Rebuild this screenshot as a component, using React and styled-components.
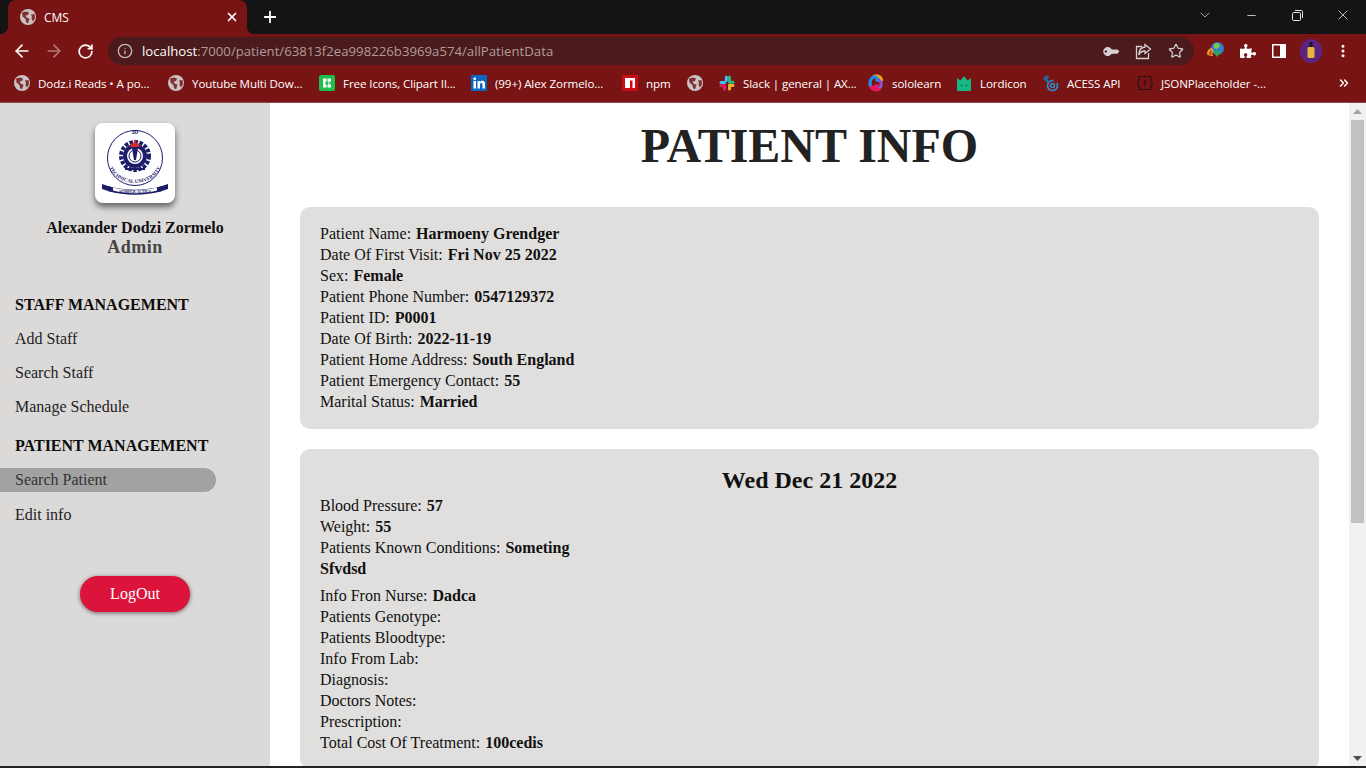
import React from "react";
import styled, { createGlobalStyle } from "styled-components";
import { ArrowLeft, ArrowRight, RotateCw, Info, Star, X, Plus, Minus, ChevronDown, ChevronsRight, EllipsisVertical } from "lucide-react";
import { FaKey, FaPuzzlePiece } from "react-icons/fa";

const Global = createGlobalStyle`
  html, body { margin: 0; padding: 0; height: 768px; overflow: hidden; background: #fff; }
  * { box-sizing: border-box; }
`;
const Page = styled.div`display:flex;flex-direction:column;width:1366px;height:768px;overflow:hidden;font-family:"Liberation Serif",serif;`;
const Browser = styled.header`flex:none;height:103px;background:#781414;font-family:"Open Sans","Noto Sans",sans-serif;color:#fff;border-bottom:1px solid #8f4a4a;`;
const TabStrip = styled.div`height:34px;background:#141414;display:flex;align-items:stretch;padding-left:8px;`;
const Tab = styled.div`position:relative;width:239px;margin-top:0;background:#781414;border-radius:8px 8px 0 0;display:flex;align-items:center;padding:0 8px 0 12px;gap:8px;
  &::before,&::after{content:"";position:absolute;bottom:0;width:8px;height:8px;background:radial-gradient(circle at var(--cx) 0,#141414 8px,#781414 8.5px);}
  &::before{left:-8px;--cx:0;}
  &::after{right:-8px;--cx:8px;}
`;
const TabTitle = styled.span`flex:1;font-size:12px;color:#fff;`;
const NewTab = styled.div`margin-left:8px;width:30px;display:flex;align-items:center;justify-content:center;`;
const Spacer = styled.div`flex:1;`;
const WinControls = styled.div`display:flex;align-items:center;margin-right:0;padding-bottom:4px;`;
const WinBtn = styled.div`width:46px;height:30px;display:flex;align-items:center;justify-content:center;color:#e4e4e4;`;
const Toolbar = styled.div`height:34px;display:flex;align-items:center;padding:0 0 0 6px;`;
const NavBtn = styled.div`width:32px;height:28px;display:flex;align-items:center;justify-content:center;color:${p => (p.$dim ? "#b47878" : "#fff")};`;
const ReloadBtn = styled(NavBtn)`padding-right:2px;`;
const Omnibox = styled.div`width:1086px;height:28px;margin-left:6px;border-radius:14px;background:#4a1a1c;display:flex;align-items:center;padding:0 2px 0 9px;`;
const Url = styled.div`flex:1;margin-left:9px;font-size:13.2px;color:#b39a9a;white-space:nowrap;`;
const Host = styled.span`color:#fff;`;
const OmniIcon = styled.div`width:32.5px;display:flex;align-items:center;justify-content:center;color:#d8d0d0;`;
const KeyGlyph = styled(FaKey)`transform:rotate(-45deg) scaleX(-1);`;
const ExtRow = styled.div`display:flex;align-items:center;margin-left:6px;`;
const ExtBtn = styled.div`width:31.7px;height:28px;display:flex;align-items:center;justify-content:center;color:#fff;`;
const BookmarkBar = styled.nav`height:34px;display:flex;align-items:center;padding-left:14px;padding-bottom:4px;gap:16px;position:relative;`;
const Bookmark = styled.div`display:flex;align-items:center;gap:8px;`;
const BookmarkText = styled.span`display:block;width:${p => p.$w}px;font-size:11.6px;letter-spacing:-0.1px;white-space:nowrap;color:#fff;`;
const More = styled.div`margin-left:auto;margin-right:15px;display:flex;color:#fff;`;

const Body = styled.div`flex:1;min-height:0;display:flex;`;
const Sidebar = styled.aside`flex:none;width:270px;background:#dcd9d9;padding-top:20px;display:flex;flex-direction:column;`;
const LogoCard = styled.div`align-self:center;width:80px;height:80px;background:#fff;border-radius:8px;box-shadow:0 4px 6px rgba(0,0,0,.55);`;
const Name = styled.div`margin-top:15px;text-align:center;font-weight:700;font-size:16px;line-height:19px;color:#111;`;
const Role = styled.div`text-align:center;font-weight:700;font-size:18px;line-height:21px;letter-spacing:.5px;color:#444;`;
const Section = styled.div`margin-top:${p => p.$top}px;padding-left:15px;font-weight:700;font-size:16px;line-height:20px;color:#0c0c0c;`;
const NavLink = styled.div`margin-top:${p => p.$top}px;height:24px;width:216px;padding-left:15px;font-size:16px;line-height:24px;color:${p => (p.$active ? "#333" : "#222")};border-radius:0 12px 12px 0;background:${p => (p.$active ? "#a2a2a2" : "transparent")};`;
const LogOut = styled.button`align-self:flex-start;margin:49px 0 0 80px;width:110px;height:36px;border:0;border-radius:18px;background:#dc143c;color:#fff;font:16px "Liberation Serif",serif;box-shadow:0 1px 4px rgba(0,0,0,.55);`;
const Main = styled.main`flex:1;min-width:0;overflow:hidden;padding:0 30px;background:#fff;`;
const Title = styled.h1`margin:15px 0 34px;font-size:48px;line-height:55px;font-weight:700;text-align:center;color:#222;`;
const Card = styled.section`background:#e0dfdd;border-radius:10px;padding:${p => p.$pad};margin-bottom:20px;font-size:16px;line-height:21px;color:#111;`;
const Row = styled.div`margin-top:${p => p.$top || 0}px;`;
const Label = styled.span`margin-right:5px;`;
const Val = styled.b`font-weight:700;color:#111;`;
const DateHead = styled.h2`margin:0 0 1px;text-align:center;font-size:24px;line-height:28px;font-weight:700;color:#111;`;
const Scrollbar = styled.div`flex:none;width:17px;background:#f1f1f1;display:flex;flex-direction:column;align-items:center;`;
const ArrowBox = styled.div`height:17px;display:flex;align-items:center;justify-content:center;`;
const Thumb = styled.div`width:13px;height:403px;background:#c1c1c1;`;
const Taskbar = styled.div`flex:none;height:2px;background:#222;`;

const Globe = () => (
  <svg width="16" height="16" viewBox="0 0 16 16">
    <circle cx="8" cy="8" r="8" fill="#c9c3c3" />
    <path d="M2 3.500 L6 2.500 L9 3.500 L8 6 L5.500 6.500 L7 9 L9.500 9.500 L8 14.500 L6 13 L5.500 10 L2.500 7.500Z M11 5.500 L14.500 5 L15 9 L13 12.500 L11.500 10 L12 8Z" fill="#781414" opacity=".85" />
  </svg>
);
const Freepik = () => (
  <svg width="16" height="16" viewBox="0 0 16 16">
    <rect width="16" height="16" rx="2" fill="#1dbf4d" />
    <path d="M4 3.500h3.500v3H6.500v3h1v3H4zM8.500 3.500H12v3h-1.500v3H12v3H8.500v-3h1v-3h-1z" fill="#fff" />
  </svg>
);
const LinkedIn = () => (
  <svg width="16" height="16" viewBox="0 0 16 16">
    <rect width="16" height="16" rx="1" fill="#0a66c2" />
    <rect x="2.500" y="6" width="2.500" height="7.500" fill="#fff" />
    <circle cx="3.700" cy="3.800" r="1.400" fill="#fff" />
    <path d="M6.500 6H9v1.200c.5-.9 1.300-1.400 2.400-1.400 2 0 2.600 1.300 2.600 3.200v4.500h-2.500V9.500c0-1-.3-1.500-1.100-1.500S9 8.600 9 9.600v3.900H6.500z" fill="#fff" />
  </svg>
);
const Npm = () => (
  <svg width="16" height="16" viewBox="0 0 16 16">
    <rect width="16" height="16" fill="#cb0b12" />
    <path d="M3 3h10v10h-2.500V5.500H8V13H3z" fill="#fff" />
  </svg>
);
const Slack = () => (
  <svg width="16" height="16" viewBox="0 0 16 16">
    <rect x="5.800" y="0.500" width="3" height="6.500" rx="1.500" fill="#36c5f0" />
    <rect x="0.500" y="6" width="6.500" height="3" rx="1.500" fill="#36c5f0" />
    <rect x="9" y="0.500" width="3" height="6.500" rx="1.500" fill="#2eb67d" />
    <rect x="9" y="5.800" width="6.500" height="3" rx="1.500" fill="#2eb67d" />
    <rect x="9" y="9" width="6.500" height="3" rx="1.500" fill="#ecb22e" />
    <rect x="9" y="9" width="3" height="6.500" rx="1.500" fill="#ecb22e" />
    <rect x="0.500" y="9.200" width="6.500" height="3" rx="1.500" fill="#e01e5a" />
    <rect x="4" y="9.200" width="3" height="6.500" rx="1.500" fill="#e01e5a" />
  </svg>
);
const Solo = () => (
  <svg width="16" height="18" viewBox="0 0 16 18" fill="none" strokeWidth="3.200" strokeLinecap="round">
    <path d="M6 2.500c3-1.500 7 0 7.500 3.500" stroke="#f7a01c" />
    <path d="M9 6c3 0 5 2.500 4 6-.5 1.500-2 2-3 2" stroke="#8e52d6" />
    <path d="M11 15.500c-3 1-7 0-8.500-3 2 1 5 1 6.500-1" stroke="#e8185a" />
    <path d="M2.500 11C1.500 8 2.500 4 6 3c2-.5 3.500 1 3 3" stroke="#1a8fe8" />
  </svg>
);
const Lordicon = () => (
  <svg width="16" height="16" viewBox="0 0 16 16">
    <path d="M1 3l3.500 2.500L8 1l3.500 4.500L15 3v12a1 1 0 0 1-1 1H2a1 1 0 0 1-1-1z" fill="#15b886" />
    <circle cx="5.500" cy="10.500" r="1" fill="#0b7a5a" />
    <circle cx="10.500" cy="10.500" r="1" fill="#0b7a5a" />
  </svg>
);
const Acess = () => (
  <svg width="17" height="18" viewBox="0 0 17 18">
    <circle cx="10.500" cy="11.500" r="5" fill="none" stroke="#2f8bd0" strokeWidth="1.700" strokeDasharray="24 4" />
    <circle cx="10.500" cy="11.500" r="2" fill="none" stroke="#2f8bd0" strokeWidth="1.500" />
    <path d="M3 1l1.500 1.500L6 1l1 2.500L5 5 7.500 7.500 5.500 9 2.500 6 1 5l1.500-1.500z" fill="#1f6ca8" />
  </svg>
);
const JsonPh = () => (
  <svg width="16" height="16" viewBox="0 0 16 16" fill="none" stroke="#111" strokeWidth="1">
    <path d="M5 1.500H3q-1 0-1 1v3L1 6.500v3l1 1v3q0 1 1 1h2M11 1.500h2q1 0 1 1v3l1 1v3l-1 1v3q0 1-1 1h-2M8 5v6M6 1.500h4M6 14.500h4" />
  </svg>
);
const ShareIcon = () => (
  <svg width="17" height="17" viewBox="0 0 17 17" fill="none" stroke="currentColor" strokeWidth="1.300">
    <path d="M7 3.500H1.500v12h12V10" />
    <path d="M10 1.500l5.500 4.500-5.500 4.500V8C7 8 5 9 3.800 12c0-4.500 2.200-7.500 6.200-8z" />
  </svg>
);
const Idm = () => (
  <svg width="20" height="20" viewBox="0 0 20 20">
    <circle cx="11.500" cy="7.500" r="6.500" fill="#2f7fd0" />
    <path d="M8 3l4-1 2 3-3 3-3-1z" fill="#7ccb4a" />
    <path d="M1 13c0-4 3-6 5-6l2 4-2 1 1 3c-3 0-6-1-6-2z" fill="#e8a020" />
    <path d="M3 14l1-5 2 1-1 4z" fill="#d83a2a" />
    <path d="M7 10h8l-4 6z" fill="#2fa84a" />
  </svg>
);
const PanelIcon = () => (
  <svg width="14" height="14" viewBox="0 0 14 14">
    <rect width="14" height="14" fill="#fff" />
    <rect x="1.500" y="1.500" width="6.500" height="11" fill="#781414" />
  </svg>
);
const Avatar = () => (
  <svg width="22" height="24" viewBox="0 0 22 24">
    <ellipse cx="11" cy="12" rx="11" ry="12" fill="#5c2480" />
    <rect x="7.500" y="8" width="7" height="11" rx="1.500" fill="#e6b53a" />
    <rect x="9.500" y="3" width="3" height="5" fill="#1c1420" />
  </svg>
);
const RestoreIcon = () => (
  <svg width="11" height="11" viewBox="0 0 11 11" fill="none" stroke="currentColor">
    <rect x="0.500" y="2.500" width="8" height="8" rx="1" />
    <path d="M3 .5h6.500a1 1 0 0 1 1 1V8" />
  </svg>
);

const Logo = () => (
  <svg width="80" height="80" viewBox="0 0 80 80">
    <defs>
      <path id="arc" d="M12.500 36a27.500 24 0 0 0 55 0" />
    </defs>
    <circle cx="40" cy="35" r="27.500" fill="none" stroke="#1c1c6a" strokeWidth="1" />
    <text x="40" y="11" textAnchor="middle" fontSize="5" fontWeight="700" fill="#1c1c6a" fontFamily="Liberation Sans, sans-serif">3D</text>
    <circle cx="40" cy="33" r="14" fill="none" stroke="#1c1c6a" strokeWidth="4" strokeDasharray="3.500 1.500" />
    <circle cx="40" cy="33" r="12" fill="#1c1c6a" />
    <circle cx="40" cy="33" r="8" fill="#fff" />
    <circle cx="40" cy="33" r="6" fill="none" stroke="#1c1c6a" strokeWidth="1" />
    <path d="M37 25h6l-2 12h-2z" fill="#1c1c6a" />
    <path d="M35.500 24l1-4 1.500 1 2-5 2 5 1.500-1 1 4z" fill="#d82a2a" />
    <path d="M30 45h20v2H30z" fill="#1c1c6a" />
    <text fontSize="5" fontWeight="700" fill="#1c1c6a" fontFamily="Liberation Serif, serif">
      <textPath href="#arc" startOffset="50%" textAnchor="middle">TECHNICAL UNIVERSITY</textPath>
    </text>
    <path d="M7 61l9 3v5l-9-3zM73 61l-9 3v5l9-3z" fill="#1c1c6a" />
    <path d="M13 63c17 5 37 5 54 0v5c-17 5-37 5-54 0z" fill="#1c1c6a" />
    <path d="M18 64.500c14 3.500 30 3.500 44 0v3c-14 3.500-30 3.500-44 0z" fill="#fff" />
    <text x="40" y="69.500" textAnchor="middle" fontSize="4" fill="#1c1c6a" fontFamily="Liberation Serif, serif" fontWeight="700">SEMPER ALTIUS</text>
  </svg>
);

const bookmarks = [
  [<Globe />, "Dodz.i Reads • A po...", 114],
  [<Globe />, "Youtube Multi Dow...", 111],
  [<Freepik />, "Free Icons, Clipart Il...", 112],
  [<LinkedIn />, "(99+) Alex Zormelo...", 111],
  [<Npm />, "npm", 25],
  [<Globe />, "", 0],
  [<Slack />, "Slack | general | AX...", 109],
  [<Solo />, "sololearn", 48],
  [<Lordicon />, "Lordicon", 46],
  [<Acess />, "ACESS API", 54],
  [<JsonPh />, "JSONPlaceholder -...", 108],
];

const patient = [
  ["Patient Name:", "Harmoeny Grendger"],
  ["Date Of First Visit:", "Fri Nov 25 2022"],
  ["Sex:", "Female"],
  ["Patient Phone Number:", "0547129372"],
  ["Patient ID:", "P0001"],
  ["Date Of Birth:", "2022-11-19"],
  ["Patient Home Address:", "South England"],
  ["Patient Emergency Contact:", "55"],
  ["Marital Status:", "Married"],
];
const visitTop = [
  ["Blood Pressure:", "57"],
  ["Weight:", "55"],
  ["Patients Known Conditions:", "Someting"],
];
const visitBottom = [
  ["Info Fron Nurse:", "Dadca"],
  ["Patients Genotype:", ""],
  ["Patients Bloodtype:", ""],
  ["Info From Lab:", ""],
  ["Diagnosis:", ""],
  ["Doctors Notes:", ""],
  ["Prescription:", ""],
  ["Total Cost Of Treatment:", "100cedis"],
];
const Line = ({ l, v }) => (
  <Row><Label>{l}</Label><Val>{v}</Val></Row>
);

export default function App() {
  return (
    <Page>
      <Global />
      <Browser>
        <TabStrip>
          <Tab>
            <Globe />
            <TabTitle>CMS</TabTitle>
            <X size={14} strokeWidth={3} />
          </Tab>
          <NewTab><Plus size={18} strokeWidth={2.400} /></NewTab>
          <Spacer />
          <WinControls>
            <WinBtn><ChevronDown size={16} strokeWidth={1} /></WinBtn>
            <WinBtn><Minus size={13} strokeWidth={1.500} /></WinBtn>
            <WinBtn><RestoreIcon /></WinBtn>
            <WinBtn><X size={16} strokeWidth={1.200} /></WinBtn>
          </WinControls>
        </TabStrip>
        <Toolbar>
          <NavBtn><ArrowLeft size={20} strokeWidth={2} /></NavBtn>
          <NavBtn $dim><ArrowRight size={20} strokeWidth={2} /></NavBtn>
          <ReloadBtn><RotateCw size={17} strokeWidth={2.400} /></ReloadBtn>
          <Omnibox>
            <Info size={16} color="#c8b8b8" />
            <Url><Host>localhost</Host>:7000/patient/63813f2ea998226b3969a574/allPatientData</Url>
            <OmniIcon><KeyGlyph size={13} /></OmniIcon>
            <OmniIcon><ShareIcon /></OmniIcon>
            <OmniIcon><Star size={16} strokeWidth={1.800} /></OmniIcon>
          </Omnibox>
          <ExtRow>
            <ExtBtn><Idm /></ExtBtn>
            <ExtBtn><FaPuzzlePiece size={16} /></ExtBtn>
            <ExtBtn><PanelIcon /></ExtBtn>
            <ExtBtn><Avatar /></ExtBtn>
            <ExtBtn><EllipsisVertical size={16} strokeWidth={2.500} /></ExtBtn>
          </ExtRow>
        </Toolbar>
        <BookmarkBar>
          {bookmarks.map(([icon, text, w], i) => (
            <Bookmark key={i}>
              {icon}
              {text && <BookmarkText $w={w}>{text}</BookmarkText>}
            </Bookmark>
          ))}
          <More><ChevronsRight size={14} strokeWidth={2.500} /></More>
        </BookmarkBar>
      </Browser>
      <Body>
        <Sidebar>
          <LogoCard><Logo /></LogoCard>
          <Name>Alexander Dodzi Zormelo</Name>
          <Role>Admin</Role>
          <Section $top={37}>STAFF MANAGEMENT</Section>
          <NavLink $top={12}>Add Staff</NavLink>
          <NavLink $top={10}>Search Staff</NavLink>
          <NavLink $top={10}>Manage Schedule</NavLink>
          <Section $top={17}>PATIENT MANAGEMENT</Section>
          <NavLink $top={12} $active>Search Patient</NavLink>
          <NavLink $top={11}>Edit info</NavLink>
          <LogOut>LogOut</LogOut>
        </Sidebar>
        <Main>
          <Title>PATIENT INFO</Title>
          <Card $pad="16px 20px 17px">
            {patient.map(([l, v]) => <Line key={l} l={l} v={v} />)}
          </Card>
          <Card $pad="17px 20px 16px">
            <DateHead>Wed Dec 21 2022</DateHead>
            {visitTop.map(([l, v]) => <Line key={l} l={l} v={v} />)}
            <Row><Val>Sfvdsd</Val></Row>
            <Row $top={6}><Label>{visitBottom[0][0]}</Label><Val>{visitBottom[0][1]}</Val></Row>
            {visitBottom.slice(1).map(([l, v]) => <Line key={l} l={l} v={v} />)}
          </Card>
        </Main>
        <Scrollbar>
          <ArrowBox>
            <svg width="9" height="6" viewBox="0 0 9 6"><path d="M4.500 0L9 5H0z" fill="#a3a3a3" /></svg>
          </ArrowBox>
          <Thumb />
          <Spacer />
          <ArrowBox>
            <svg width="9" height="6" viewBox="0 0 9 6"><path d="M4.500 6L9 1H0z" fill="#505050" /></svg>
          </ArrowBox>
        </Scrollbar>
      </Body>
      <Taskbar />
    </Page>
  );
}
